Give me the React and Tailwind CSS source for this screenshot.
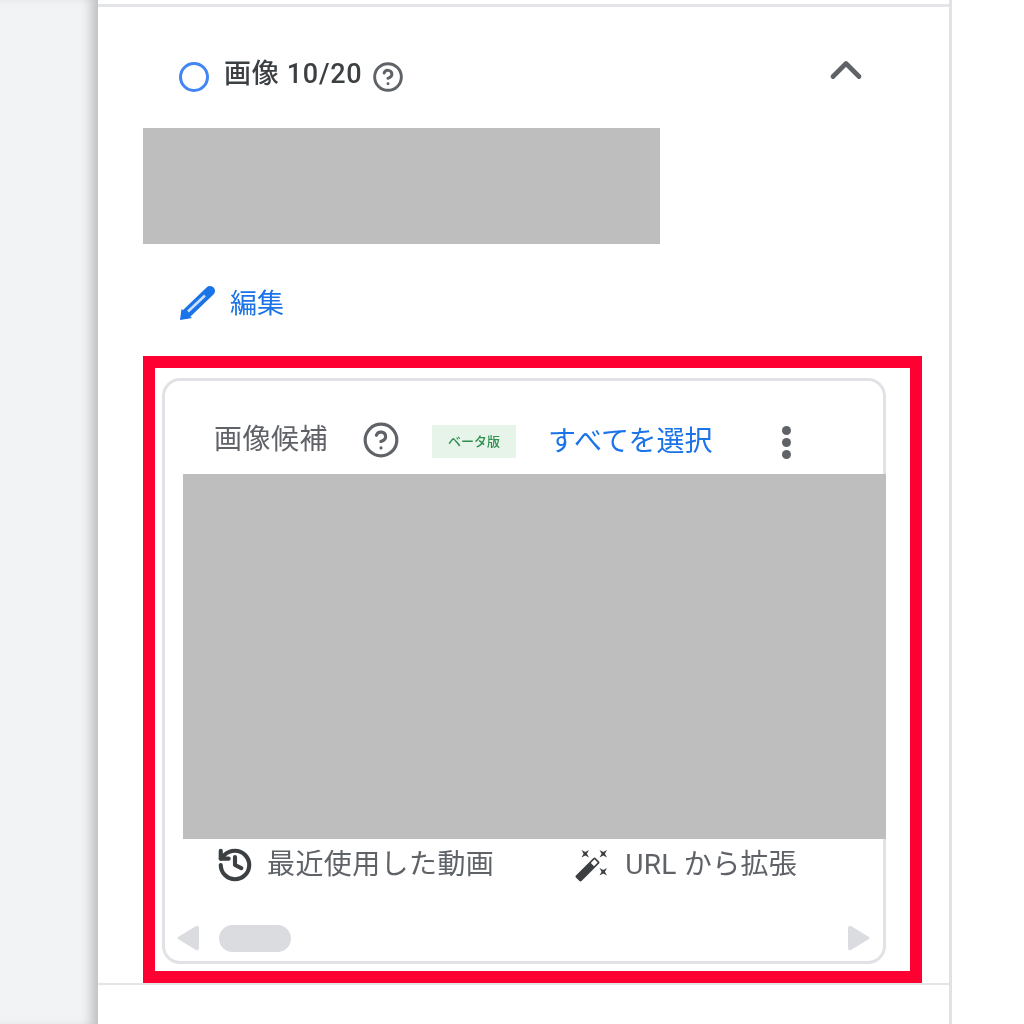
import React from 'react';
import { ChevronUp, CircleHelp, History } from 'lucide-react';

const font = 'font-["Roboto","Noto_Sans_CJK_JP",sans-serif]';

function Wand({ className }) {
  return (
    <svg viewBox="0 0 24 24" className={className} fill="currentColor">
      <path d="M7.5 5.6 10 7 8.6 4.5 10 2 7.5 3.4 5 2l1.4 2.5L5 7zm12 9.8L17 14l1.4 2.5L17 19l2.5-1.4L22 19l-1.4-2.5L22 14zM22 2l-2.5 1.4L17 2l1.4 2.5L17 7l2.5-1.4L22 7l-1.4-2.5zm-7.63 5.29a.9959.9959 0 0 0-1.41 0L1.29 18.96c-.39.39-.39 1.02 0 1.41l2.34 2.34c.39.39 1.02.39 1.41 0L16.7 11.05c.39-.39.39-1.02 0-1.41l-2.33-2.35zm-1.03 5.49-2.12-2.12 2.44-2.44 2.12 2.12-2.44 2.44z" />
    </svg>
  );
}

function Pencil({ className }) {
  return (
    <svg viewBox="0 0 38 36" className={className} fill="none">
      <path d="M1 35 2.5 24 13 33z" fill="#1a73e8" />
      <path d="M7 29 31 6" stroke="#1a73e8" strokeWidth="10" strokeLinecap="round" />
      <path d="M9 26.5 26 10.5" stroke="#cfe0fb" strokeWidth="2.5" />
    </svg>
  );
}

function Arrow({ flip }) {
  return (
    <svg viewBox="0 0 23 28" className={flip ? 'w-[23px] h-[28px] rotate-180' : 'w-[23px] h-[28px]'}>
      <path d="M20 2 2 13q-1.5 1 0 2l18 11q3 1 3-2V4q0-3-3-2z" fill="#dadce0" />
    </svg>
  );
}

export default function App() {
  return (
    <div className={`flex h-[1024px] w-[1024px] overflow-hidden bg-white text-[#5f6368] blur-[0.7px] ${font}`}>
      {/* left page background, the panel's shadow falls on it */}
      <div className="w-[98px] shrink-0 bg-[#f1f3f4] shadow-[inset_-12px_0_12px_-6px_rgba(60,64,67,0.3)]" />

      {/* side panel */}
      <div className="flex h-full w-[854px] shrink-0 flex-col border-r-[3px] border-[#e0e2e6] bg-white">
        <div className="h-[7px] shrink-0 border-b-[3px] border-[#e3e5e9]" />

        <div className="flex h-[121px] shrink-0 items-start pl-[81px] pr-[85px] pt-[49px]">
          <div className="mt-[6px] h-[30px] w-[30px] rounded-full border-[3px] border-[#4285f4]" />
          <span className="ml-[15px] text-[27px] leading-[36px] tracking-[0.7px] text-[#3c4043] font-medium">画像 10/20</span>
          <CircleHelp className="ml-[10px] mt-[5px] h-[32px] w-[32px] text-[#5f6368]" strokeWidth={2.2} />
          <ChevronUp className="ml-auto -mt-[12px] h-[52px] w-[52px] text-[#5f6368] -mr-[8px]" strokeWidth={2.2} />
        </div>

        <div className="ml-[45px] h-[116px] w-[517px] shrink-0 bg-[#bebebe]" />

        <div className="flex h-[112px] shrink-0 items-start pl-[81px] pt-[41px]">
          <Pencil className="h-[36px] w-[38px]" />
          <span className="ml-[13px] text-[27px] leading-[38px] text-[#1a73e8]">編集</span>
        </div>

        {/* highlighted box */}
        <div className="ml-[45px] h-[627px] w-[779px] shrink-0 border-[12px] border-[#ff0033] pl-[7px] pt-[10px]">
          <div className="flex h-[586px] w-[724px] flex-col rounded-[18px] border-[3px] border-[#e0e2e6]">
            <div className="flex h-[93px] shrink-0 items-start pl-[49px] pt-[39px]">
              <span className="text-[28px] leading-[40px] tracking-[0.5px] text-[#5f6368]">画像候補</span>
              <CircleHelp className="ml-[34px] mt-[1px] h-[38px] w-[38px] text-[#5f6368]" strokeWidth={2} />
              <div className="ml-[32px] mt-[5px] flex h-[33px] w-[84px] items-center justify-center bg-[#e6f4ea] text-[13px] font-medium text-[#2f8f4e]">
                ベータ版
              </div>
              <span className="ml-[32px] text-[28px] leading-[44px] text-[#1a73e8]">すべてを選択</span>
              <div className="ml-[70px] mt-[6px] flex h-[33px] flex-col justify-between">
                <div className="h-[9px] w-[9px] rounded-full bg-[#5f6368]" />
                <div className="h-[9px] w-[9px] rounded-full bg-[#5f6368]" />
                <div className="h-[9px] w-[9px] rounded-full bg-[#5f6368]" />
              </div>
            </div>

            <div className="ml-[18px] -mr-[3px] h-[365px] shrink-0 bg-[#bebebe]" />

            <div className="flex h-[49px] shrink-0 items-center pl-[51px] pt-[3px]">
              <History className="h-[38px] w-[38px] text-[#3c4043]" strokeWidth={2.6} />
              <span className="ml-[13px] text-[28px] leading-[38px] tracking-[0.4px]">最近使用した動画</span>
              <Wand className="ml-[80px] h-[36px] w-[36px] text-[#3c4043]" />
              <span className="ml-[15px] text-[28px] leading-[38px] tracking-[0.3px]">URL から拡張</span>
            </div>

            <div className="flex items-center pl-[11px] pr-[12px] pt-[36px]">
              <Arrow />
              <div className="ml-[20px] h-[27px] w-[72px] rounded-full bg-[#dadce0]" />
              <div className="ml-auto">
                <Arrow flip />
              </div>
            </div>
          </div>
        </div>

        <div className="h-[2px] shrink-0 bg-[#e3e5e9]" />
      </div>
    </div>
  );
}
